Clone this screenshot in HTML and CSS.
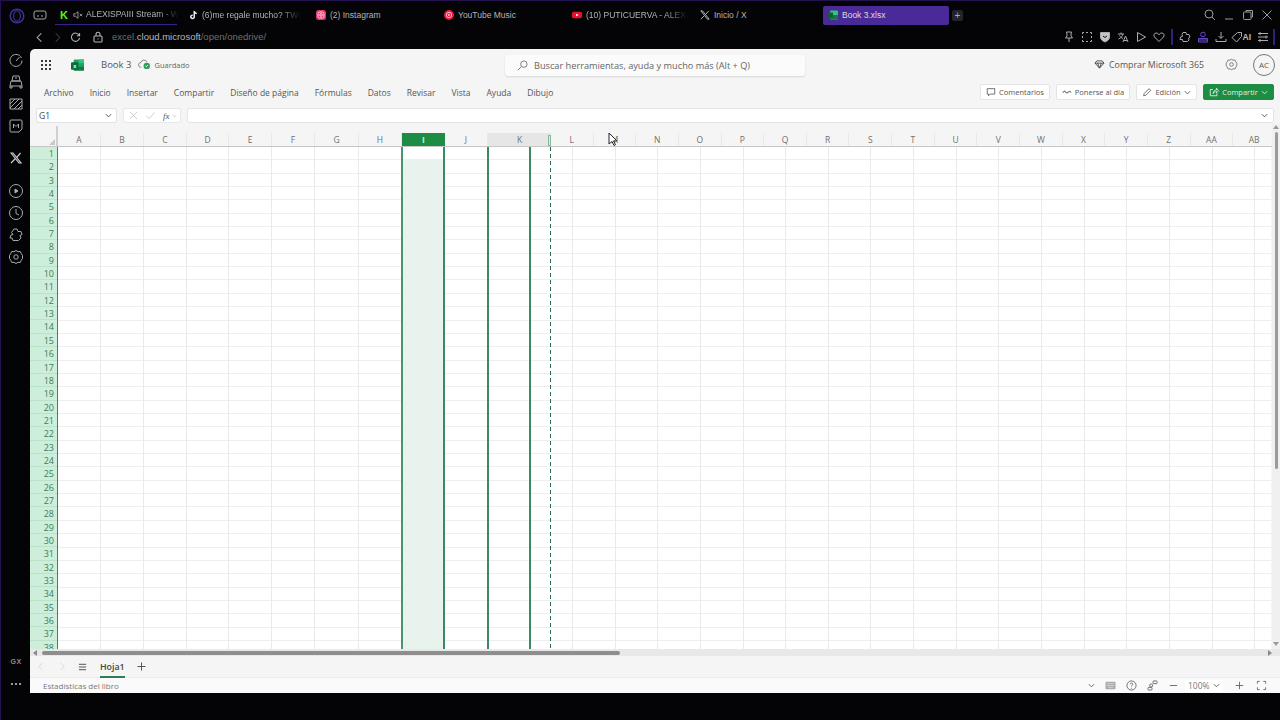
FILE: index.html
```html
<!DOCTYPE html>
<html lang="es">
<head>
<meta charset="utf-8">
<title>Book 3.xlsx</title>
<link rel="stylesheet" href="styles.css">
</head>
<body>
<div class="browser">
  <aside class="rail">
    <div class="rail-logo"><svg width="18" height="18" viewBox="0 0 18 18" fill="none" stroke="#41309a"><circle cx="9" cy="9" r="6.800" stroke-width="1.500"/><ellipse cx="9" cy="9" rx="3.400" ry="5.200" stroke-width="1.200"/></svg></div>
    <div class="rail-group">
      <svg class="ri" viewBox="0 0 16 16"><path d="M13.500 6A6 6 0 1 0 14 8.500M8 9l3.500-4"/></svg>
      <svg class="ri" viewBox="0 0 16 16"><path d="M5 2h6l1 5H4zM3 7h10l1 5H2zM2 12v2h2v-2M12 12v2h2v-2M7 4h2"/></svg>
      <svg class="ri" viewBox="0 0 16 16"><path d="M2 3h12v10H2zM2 8l5-5M2 12l9-9M6 13l8-8M10 13l4-4"/></svg>
      <svg class="ri" viewBox="0 0 16 16"><path d="M3 2h10a1 1 0 0 1 1 1v8l-3 3H3a1 1 0 0 1-1-1V3a1 1 0 0 1 1-1zM5.500 10V6l2.500 2.500L10.500 6v4"/></svg>
    </div>
    <svg class="rail-x" viewBox="0 0 12 12"><path d="M1 1l8 10h2L3 1zM10.500 1L6.800 5.300M5 7l-4 4"/></svg>
    <div class="rail-group">
      <svg class="ri" viewBox="0 0 16 16"><circle cx="8" cy="8" r="6.500"/><path d="M7 6l3 2-3 2z" fill="#bdbdbd"/></svg>
      <svg class="ri" viewBox="0 0 16 16"><circle cx="8" cy="8" r="6.500"/><path d="M8 4v4.500l3 1.500"/></svg>
      <svg class="ri" viewBox="0 0 16 16"><path d="M6 2h3l1 2.500h3l1 3-2 1 1 2.500-2.500 2.500H5l-1-2.500H2l1-3 2-.5-1.500-2z"/></svg>
      <svg class="ri" viewBox="0 0 16 16"><circle cx="8" cy="8" r="2.200"/><path d="M8 1.500l2 1.200 2.300-.2 1 2.200 1.200 1.800v3l-1.200 1.800-1 2.200-2.300-.2-2 1.200-2-1.200-2.300.2-1-2.200L1.500 9.500v-3l1.200-1.800 1-2.200 2.300.2z"/></svg>
    </div>
    <div class="rail-foot">
      <span class="rail-gx">GX</span>
      <span class="rail-dots"><i></i><i></i><i></i></span>
    </div>
  </aside>
  <div class="main">
    <div class="tabstrip">
      <svg class="workspace" viewBox="0 0 14 12" fill="none" stroke="#a5a5a5"><rect x="1" y="2" width="12" height="8" rx="2"/><path d="M4 7h2M8 7h2"/></svg>
      <div class="tab tab-live">
        <span class="fav fav-k">K</span>
        <svg class="speaker" viewBox="0 0 12 10" fill="none" stroke="#aaa"><path d="M1 3.500h2L6 1v8L3 6.500H1zM8 3.500l3 3M11 3.500l-3 3"/></svg>
        <span class="tab-title fade-short">ALEXISPAIII Stream - W</span>
      </div>
      <div class="tab">
        <svg class="fav" viewBox="0 0 10 10"><path d="M5.500 1h1.500c.2 1 .8 1.600 1.800 1.700v1.500c-.7 0-1.300-.2-1.800-.5v3C7 8.300 6 9.200 4.500 9.200 3 9.200 2 8.200 2 6.800c0-1.500 1.200-2.500 2.700-2.300v1.500c-.7-.2-1.200.2-1.200.8 0 .5.400.9 1 .9s1-.4 1-1z" fill="#eee"/></svg>
        <span class="tab-title fade">(6)me regale mucho? TWI</span>
      </div>
      <div class="tab">
        <svg class="fav" viewBox="0 0 10 10" fill="none"><rect width="10" height="10" rx="2.500" fill="#e1306c"/><rect x="2" y="2" width="6" height="6" rx="1.700" stroke="#fff" stroke-width=".8"/><circle cx="5" cy="5" r="1.300" stroke="#fff" stroke-width=".8"/></svg>
        <span class="tab-title">(2) Instagram</span>
      </div>
      <div class="tab">
        <svg class="fav" viewBox="0 0 10 10" fill="none"><circle cx="5" cy="5" r="5" fill="#f0153f"/><circle cx="5" cy="5" r="2.700" stroke="#fff" stroke-width=".7"/><path d="M4.300 3.800l2 1.200-2 1.200z" fill="#fff"/></svg>
        <span class="tab-title">YouTube Music</span>
      </div>
      <div class="tab">
        <svg class="fav" viewBox="0 0 11 10"><rect y="1.500" width="11" height="7" rx="1.800" fill="#e8112d"/><path d="M4.500 3.500L7.500 5l-3 1.500z" fill="#fff"/></svg>
        <span class="tab-title fade">(10) PUTICUERVA - ALEXI</span>
      </div>
      <div class="tab">
        <svg class="fav fav-x" viewBox="0 0 12 12"><path d="M1 1l8 10h2L3 1zM10.500 1L6.800 5.300M5 7l-4 4"/></svg>
        <span class="tab-title">Inicio / X</span>
      </div>
      <div class="tab tab-active">
        <svg class="fav" viewBox="0 0 10 10"><rect x="2" y=".5" width="8" height="9" rx="1" fill="#33c481"/><rect x="2" y="5" width="8" height="4.500" fill="#107c41"/><rect y="2.500" width="5" height="5" rx=".6" fill="#185c37"/></svg>
        <span class="tab-title">Book 3.xlsx</span>
      </div>
      <span class="new-tab">+</span>
      <div class="winctl">
        <svg class="wi" viewBox="0 0 12 12"><circle cx="5" cy="5" r="4"/><path d="M8 8l3 3"/></svg>
        <svg class="wi" viewBox="0 0 12 12"><path d="M2 10h8"/></svg>
        <svg class="wi" viewBox="0 0 12 12"><rect x="1.500" y="3" width="7.500" height="7.500" rx="1"/><path d="M4 3V1.500h6.500V8H9"/></svg>
        <svg class="wi" viewBox="0 0 12 12"><path d="M1.500 1.500l9 9M10.500 1.500l-9 9"/></svg>
      </div>
    </div>
    <div class="addressbar">
      <svg class="ai ai-nav" viewBox="0 0 10 12"><path d="M7 1.500L2.500 6 7 10.500"/></svg>
      <svg class="ai ai-nav dim" viewBox="0 0 10 12"><path d="M3 1.500L7.500 6 3 10.500"/></svg>
      <svg class="ai ai-nav" viewBox="0 0 12 12"><path d="M10 3.500A4.500 4.500 0 1 0 10.500 6.500M10.500 1v3h-3"/></svg>
      <svg class="ai ai-lock" viewBox="0 0 10 12"><rect x="1" y="5" width="8" height="6" rx="1"/><path d="M3 5V3.200a2 2 0 0 1 4 0V5M5 7.500v1"/></svg>
      <div class="url">excel.<b>cloud.microsoft</b>/open/onedrive/</div>
      <div class="ext">
        <svg class="ei" viewBox="0 0 12 12"><path d="M3.500 1h5L8 3v2l1.500 2h-7L4 5V3zM6 7v4"/></svg>
        <svg class="ei" viewBox="0 0 12 12"><path d="M1.500 3V1.500H3M5 1.500h2M9 1.500h1.500V3M10.500 5v2M10.500 9v1.500H9M7 10.500H5M3 10.500H1.500V9M1.500 7V5"/></svg>
        <svg class="ei" viewBox="0 0 12 12"><path d="M1.500 1.500h9v4.500c0 2.500-2 4-4.500 5-2.500-1-4.500-2.500-4.500-5z" fill="#c4c4c4"/><path d="M4 5l2 1.500L8 5" stroke="#111"/></svg>
        <svg class="ei" viewBox="0 0 12 12"><path d="M1 3h6M4 1.500V3M6 3c-.5 2-2 4-4.500 5M2.500 4.500C3.500 6 4.500 7 6 7.500M6 11l2.500-6 2.500 6M7 9.500h3"/></svg>
        <svg class="ei" viewBox="0 0 12 12"><path d="M2.500 1.500L10.500 6l-8 4.500z"/></svg>
        <svg class="ei" viewBox="0 0 12 12"><path d="M6 10.500L1.500 6C.3 4.500 1 2 3.300 2 4.500 2 5.500 2.800 6 3.800 6.500 2.800 7.500 2 8.700 2 11 2 11.700 4.500 10.500 6z"/></svg>
        <span class="ext-sep"></span>
        <svg class="ei" viewBox="0 0 12 12"><path d="M4 1.500h3l.5 2h2.500l1 2.500-1.500 1 .5 2-1.500 1.500H4L3.500 8.500H1L1.500 6 3.500 5.500 3 3.500z"/></svg>
        <svg class="ei ei-purple" viewBox="0 0 12 12"><circle cx="6" cy="3.500" r="2.300"/><path d="M1.500 7.500h9v3.500h-9zM1.500 9h9"/></svg>
        <svg class="ei" viewBox="0 0 12 12"><path d="M6 1v6M3.500 5L6 7.500 8.500 5M1 8v2.500h10V8"/></svg>
        <span class="ext-ai"><svg class="ei" viewBox="0 0 12 12"><path d="M1 6.500L6.500 1.500h4v4L5.500 11zM8 3.500h.5"/></svg>AI</span>
        <svg class="ei ei-menu" viewBox="0 0 12 12"><path d="M1 2.500h10M1 6h10M1 9.500h10M3 1v3M9 4.500v3M3 8v3"/></svg>
        <span class="ext-sep"></span>
      </div>
    </div>
    <div class="app">
      <header class="titlebar">
        <div class="waffle"><i></i><i></i><i></i><i></i><i></i><i></i><i></i><i></i><i></i></div>
        <svg class="xl-logo" viewBox="0 0 14 12"><rect x="3" y="0" width="11" height="12" rx="1" fill="#21a366"/><rect x="8.500" y="0" width="5.500" height="4" fill="#33c481"/><rect x="3" y="8" width="11" height="4" fill="#107c41"/><rect x="0" y="3" width="8" height="8" rx="1" fill="#0e6b39"/><text x="4" y="9.300" class="xl-x">x</text></svg>
        <span class="doc-name">Book 3</span>
        <svg class="cloud" viewBox="0 0 14 12"><path d="M3.500 9H3A2.500 2.500 0 0 1 3 4 3.500 3.500 0 0 1 9.700 3.500" fill="none" stroke="#777" stroke-width=".9"/><circle cx="9.500" cy="7.500" r="3.500" fill="#2f9e58"/><path d="M8 7.500l1 1 2-2" fill="none" stroke="#fff" stroke-width=".9"/></svg>
        <span class="saved">Guardado</span>
        <div class="search">
          <svg class="search-ic" viewBox="0 0 12 12" fill="none" stroke="#777"><circle cx="7.500" cy="4.500" r="3.500"/><path d="M5 7l-4 4"/></svg>
          <span>Buscar herramientas, ayuda y mucho más (Alt + Q)</span>
        </div>
        <div class="title-right">
          <svg class="gem" viewBox="0 0 12 10" fill="none" stroke="#444"><path d="M3 1h6l2 2.500L6 9 1 3.500zM1 3.500h10M4 3.500L6 9l2-5.500"/></svg>
          <span class="buy">Comprar Microsoft 365</span>
          <svg class="gear" viewBox="0 0 16 16" fill="none" stroke="#666"><circle cx="8" cy="8" r="2.200"/><path d="M8 1.500l2 1.200 2.300-.2 1 2.200 1.200 1.800v3l-1.200 1.800-1 2.200-2.300-.2-2 1.200-2-1.200-2.300.2-1-2.200L1.500 9.500v-3l1.200-1.800 1-2.200 2.300.2z"/></svg>
          <span class="avatar">AC</span>
        </div>
      </header>
      <nav class="ribbon">
        <span>Archivo</span><span>Inicio</span><span>Insertar</span><span>Compartir</span><span>Diseño de página</span><span>Fórmulas</span><span>Datos</span><span>Revisar</span><span>Vista</span><span>Ayuda</span><span>Dibujo</span>
        <div class="actions">
          <button class="btn btn-comments"><svg class="bi" viewBox="0 0 12 12" fill="none" stroke="#555"><path d="M1.500 2h9v6.500H5L3 10.500v-2H1.500z"/></svg>Comentarios</button>
          <button class="btn btn-catch"><svg class="bi" viewBox="0 0 12 12" fill="none" stroke="#333"><path d="M1 7l2-2.500L5 7l2 0 1.500-2L11 6.500"/></svg>Ponerse al día</button>
          <button class="btn btn-edit"><svg class="bi" viewBox="0 0 12 12" fill="none" stroke="#555"><path d="M2 10.500l.5-2.500 6-6 2 2-6 6z"/></svg>Edición<svg class="chev" viewBox="0 0 8 5" fill="none" stroke="#555"><path d="M1 1l3 3 3-3"/></svg></button>
          <button class="btn btn-share"><svg class="bi" viewBox="0 0 12 12" fill="none" stroke="#e6f5ec"><path d="M9.500 7.500V10.500H1.500V3h3M5 8c0-3 2-4.500 4-4.500V1.500l2.500 3L9 7V5.500C7.500 5.500 6 6 5 8z"/></svg>Compartir<svg class="chev" viewBox="0 0 8 5" fill="none" stroke="#e6f5ec"><path d="M1 1l3 3 3-3"/></svg></button>
        </div>
      </nav>
      <div class="formula">
        <div class="namebox">G1<svg class="chev" viewBox="0 0 8 5" fill="none" stroke="#444"><path d="M1 1l3 3 3-3"/></svg></div>
        <div class="fx-tools">
          <svg class="fx-ic" viewBox="0 0 10 10" fill="none" stroke="#c8c8c8"><path d="M1 1l8 8M9 1l-8 8"/></svg>
          <svg class="fx-ic" viewBox="0 0 10 10" fill="none" stroke="#c8c8c8"><path d="M.5 5.500l3 3 6-7"/></svg>
          <span class="fx-label">fx</span>
          <svg class="fx-chev" viewBox="0 0 8 5" fill="none" stroke="#bbb"><path d="M1 1l3 3 3-3"/></svg>
        </div>
        <div class="fx-input"><svg class="chev" viewBox="0 0 8 5" fill="none" stroke="#444"><path d="M1 1l3 3 3-3"/></svg></div>
      </div>
      <div class="sheet">
        <div class="grid-wrap">
          <div class="head-row">
            <div class="corner"></div>
            <div class="heads">
              <span>A</span><span>B</span><span>C</span><span>D</span><span>E</span><span>F</span><span>G</span><span>H</span><span class="h-sel">I</span><span>J</span><span class="h-k">K<i class="h-handle"></i></span><span>L</span><span>M</span><span>N</span><span>O</span><span>P</span><span>Q</span><span>R</span><span>S</span><span>T</span><span>U</span><span>V</span><span>W</span><span>X</span><span>Y</span><span>Z</span><span>AA</span><span>AB</span>
            </div>
            <svg class="cursor" viewBox="0 0 10 15"><path d="M1 1v11l3-2.500 2 4 1.500-.8-2-3.800h3.500z" fill="#fff" stroke="#222" stroke-width="1"/></svg>
          </div>
          <div class="body-row">
            <div class="rownums">
              <span>1</span><span>2</span><span>3</span><span>4</span><span>5</span><span>6</span><span>7</span><span>8</span><span>9</span><span>10</span><span>11</span><span>12</span><span>13</span><span>14</span><span>15</span><span>16</span><span>17</span><span>18</span><span>19</span><span>20</span><span>21</span><span>22</span><span>23</span><span>24</span><span>25</span><span>26</span><span>27</span><span>28</span><span>29</span><span>30</span><span>31</span><span>32</span><span>33</span><span>34</span><span>35</span><span>36</span><span>37</span><span>38</span>
            </div>
            <div class="cells">
              <i></i><i></i><i></i><i></i><i></i><i></i><i></i><i></i><i class="c-sel"><b></b></i><i></i><i class="c-k"></i><i class="c-dash"></i><i></i><i></i><i></i><i></i><i></i><i></i><i></i><i></i><i></i><i></i><i></i><i></i><i></i><i></i><i></i><i></i><i></i><i></i><i></i>
            </div>
          </div>
        </div>
        <div class="vscroll"><i class="arr-up"></i><b></b><i class="arr-down"></i></div>
      </div>
      <div class="hscroll"><i class="arr-left"></i><b></b><i class="arr-right"></i></div>
      <div class="sheetbar">
        <svg class="sb-nav" viewBox="0 0 6 10" fill="none" stroke="#d0d0d0"><path d="M5 1L1 5l4 4"/></svg>
        <svg class="sb-nav" viewBox="0 0 6 10" fill="none" stroke="#d0d0d0"><path d="M1 1l4 4-4 4"/></svg>
        <svg class="sb-menu" viewBox="0 0 10 8" fill="none" stroke="#444"><path d="M1 1h8M1 4h8M1 7h8"/></svg>
        <span class="sheet-tab">Hoja1</span>
        <svg class="sb-add" viewBox="0 0 9 9" fill="none" stroke="#555"><path d="M4.500 .5v8M.5 4.500h8"/></svg>
      </div>
      <footer class="status">
        <span>Estadísticas del libro</span>
        <div class="status-right">
          <svg class="chev" viewBox="0 0 8 5" fill="none" stroke="#555"><path d="M1 1l3 3 3-3"/></svg>
          <svg class="si" viewBox="0 0 12 10" fill="#888"><rect x=".5" y="1" width="11" height="8" rx="1" fill="#aaa"/><path d="M2 3h8M2 5h8M3 7h6" stroke="#eee" stroke-width=".6"/></svg>
          <svg class="si" viewBox="0 0 12 12" fill="none" stroke="#666"><circle cx="6" cy="6" r="5"/><path d="M4.500 4.500C4.500 3 7.500 3 7.500 4.500 7.500 5.500 6 5.500 6 7M6 8.500v1"/></svg>
          <svg class="si" viewBox="0 0 12 12" fill="none" stroke="#666"><rect x="6.500" y="1" width="4.500" height="3" rx="1"/><rect x="3" y="4.500" width="3" height="3" rx="1"/><rect x="1" y="8" width="4.500" height="3" rx="1"/></svg>
          <svg class="si" viewBox="0 0 12 12" fill="none" stroke="#666"><path d="M2 6h8"/></svg>
          <span class="zoom">100%<svg class="chev" viewBox="0 0 8 5" fill="none" stroke="#555"><path d="M1 1l3 3 3-3"/></svg></span>
          <svg class="si" viewBox="0 0 12 12" fill="none" stroke="#666"><path d="M6 2v8M2 6h8"/></svg>
          <svg class="si si-full" viewBox="0 0 12 12" fill="none" stroke="#666"><path d="M1.500 4V1.500H4M8 1.500h2.500V4M10.500 8v2.500H8M4 10.500H1.500V8"/></svg>
        </div>
      </footer>
    </div>
  </div>
</div>
</body>
</html>
```
FILE: styles.css
```css
* { box-sizing: border-box; }
html, body { margin: 0; height: 100%; overflow: hidden; background: #000; }
body { font-family: "Open Sans", "Noto Sans", sans-serif; color: #555; }
svg { display: block; flex: none; }

.browser { display: flex; width: 1280px; height: 720px; background: #040406; border-top: 1px solid #23104f; border-left: 1px solid #23104f; }

/* Left rail */
.rail { width: 29px; height: 693px; display: flex; flex-direction: column; align-items: center; }
.rail-logo { height: 29px; display: flex; align-items: center; margin-left: 2px; }
.rail-group { display: flex; flex-direction: column; align-items: center; gap: 6px; margin-left: 1px; }
.rail-group:nth-of-type(2) { margin-top: 22px; }
.ri { width: 16px; height: 16px; fill: none; stroke: #a9a9a9; stroke-width: 1; }
.rail-x { width: 12px; height: 12px; margin: 18px 0 19px 1px; fill: none; stroke: #cfcfcf; stroke-width: 1.200; }
.rail-foot { margin-top: auto; margin-left: 1px; display: flex; flex-direction: column; align-items: center; gap: 8px; padding-bottom: 3px; }
.rail-gx { font: 700 7px/14px "Liberation Sans", sans-serif; letter-spacing: .5px; color: #8f8f8f; }
.rail-dots { height: 14px; display: flex; align-items: center; gap: 2px; }
.rail-dots i { width: 2px; height: 2px; background: #ccc; border-radius: 50%; }

.main { width: 1250px; height: 692px; display: flex; flex-direction: column; }

/* Tab strip */
.tabstrip { height: 26px; display: flex; align-items: center; font: 8.500px/19px "Liberation Sans", sans-serif; color: #b4b4b4; margin-left: -30px; padding-top: 2px; }
.workspace { width: 14px; height: 12px; margin-left: 33px; margin-right: 8px; }
.tab { width: 128px; height: 19px; display: flex; align-items: center; padding-left: 5px; gap: 4px; }
.tab-live { width: 122px; margin-right: 6px; border-bottom: 1px solid #35228a; gap: 3px; }
.tab-active { background: #4a2a98; border-radius: 2px; color: #ddd; width: 126px; margin-right: 3px; }
.fav { width: 10px; height: 10px; flex: none; }
.fav-k { font: 900 11px/10px "Liberation Sans", sans-serif; color: #53fc18; width: 10px; }
.fav-x { fill: none; stroke: #c4c4c4; stroke-width: 1.100; }
.speaker { width: 10px; height: 10px; }
.tab-title { white-space: nowrap; }
.fade, .fade-short { -webkit-mask-image: linear-gradient(to right, #000 78%, transparent 100%); mask-image: linear-gradient(to right, #000 78%, transparent 100%); }
.new-tab { width: 11px; height: 11px; background: #23232e; border-radius: 2px; color: #aaa; font: 10px/11px "Liberation Sans", sans-serif; text-align: center; }
.winctl { margin-left: auto; display: flex; gap: 7px; padding-right: 7px; }
.wi { width: 12px; height: 12px; fill: none; stroke: #999; stroke-width: 1; }

/* Address bar */
.addressbar { height: 22px; display: flex; align-items: center; padding-bottom: 2px; font: 9.500px/14px "Liberation Sans", sans-serif; }
.ai { fill: none; stroke: #b4b4b4; stroke-width: 1.100; }
.ai-nav { width: 11px; height: 11px; margin-right: 7px; }
.ai-nav:first-child { margin-left: 4px; }
.ai-nav.dim { stroke: #3d3d3d; }
.ai-lock { width: 10px; height: 12px; margin-left: 5px; margin-right: 9px; }
.url { color: #6f6f6f; }
.url b { color: #b9b9b9; font-weight: 400; }
.ext { margin-left: auto; display: flex; align-items: center; gap: 6px; padding-right: 5px; }
.ei { width: 12px; height: 12px; fill: none; stroke: #ababab; stroke-width: 1; }
.ei-purple { stroke: #6a4bd0; }
.ei-menu { margin-right: -2px; }
.ext-sep { width: 2px; height: 16px; background: #34207c; }
.ext-ai { display: flex; align-items: center; margin-left: -2px; font: 700 8.500px/12px "Liberation Sans", sans-serif; color: #bbb; }

/* Excel app */
.app { flex: 1; background: #f5f5f5; border-radius: 5px 0 0 0; display: flex; flex-direction: column; overflow: hidden; }
.titlebar { height: 31px; display: flex; align-items: center; flex: none; }
.waffle { width: 10px; height: 10px; margin-left: 11px; display: grid; grid-template-columns: repeat(3, 2px); gap: 2px; }
.waffle i { background: #3a3a3a; }
.xl-logo { width: 13px; height: 12px; margin-left: 20px; }
.xl-x { font: 700 6px "Liberation Sans", sans-serif; fill: #fff; text-anchor: middle; }
.doc-name { font-size: 9.500px; margin-left: 17px; color: #555; }
.cloud { width: 13px; height: 11px; margin-left: 7px; }
.saved { font-size: 7.500px; margin-left: 3px; color: #666; }
.search { position: absolute; left: 505px; top: 55px; width: 300px; height: 21px; background: #fbfbfb; border-radius: 3px; box-shadow: 0 1px 2px rgba(0,0,0,.12); display: flex; align-items: center; padding-left: 12px; gap: 6px; font-size: 9.200px; color: #666; }
.search-ic { width: 11px; height: 11px; }
.title-right { margin-left: auto; display: flex; align-items: center; padding-right: 5px; }
.gem { width: 11px; height: 9px; margin-right: 4px; }
.buy { font-size: 8.800px; color: #555; }
.gear { width: 13px; height: 13px; margin-left: 21px; margin-right: 15px; }
.avatar { width: 22px; height: 22px; border: 1px solid #777; border-radius: 50%; font-size: 8px; line-height: 20px; text-align: center; color: #555; }

.ribbon { height: 24px; display: flex; align-items: center; gap: 16px; padding: 0 6px 0 14px; font-size: 8.500px; color: #555; flex: none; }
.actions { margin-left: auto; display: flex; gap: 6px; }
.btn { height: 16px; display: flex; align-items: center; justify-content: center; gap: 3px; border: 1px solid #e4e4e4; border-radius: 2px; background: #fff; font: 7.500px/14px "Open Sans", sans-serif; color: #555; padding: 0; }
.bi { width: 10px; height: 10px; }
.chev { width: 7px; height: 5px; }
.btn-comments { width: 70px; }
.btn-catch { width: 74px; }
.btn-edit { width: 61px; }
.btn-share { width: 71px; background: #1e8c45; border-color: #1e8c45; color: #dff3e6; }

.formula { height: 15px; margin: 4px 6px 0; display: flex; gap: 6px; flex: none; }
.namebox { width: 81px; background: #fff; border: 1px solid #e2e2e2; border-radius: 2px; display: flex; align-items: center; justify-content: space-between; padding: 0 4px 0 2px; font-size: 8.500px; color: #444; }
.fx-tools { width: 58px; background: #fff; border: 1px solid #e8e8e8; border-radius: 2px; display: flex; align-items: center; padding-left: 5px; gap: 8px; }
.fx-ic { width: 9px; height: 9px; }
.fx-label { font: italic 9px/12px "Liberation Serif", serif; color: #555; }
.fx-chev { width: 5px; height: 4px; margin-left: -6px; }
.fx-input { flex: 1; background: #fff; border: 1px solid #e4e4e4; border-radius: 2px; display: flex; align-items: center; justify-content: flex-end; padding-right: 5px; }

/* Sheet */
.sheet { height: 525px; margin-top: 1px; display: flex; flex: none; }
.grid-wrap { width: 1242px; display: flex; flex-direction: column; overflow: hidden; }
.head-row { height: 23px; display: flex; align-items: flex-end; position: relative; flex: none; border-bottom: 1px solid #c6c6c6; }
.corner { width: 28px; height: 20px; flex: none; background: linear-gradient(135deg, transparent 62%, #c8c8c8 63%); background-size: 8px 8px; background-position: right 1px bottom 1px; background-repeat: no-repeat; border-right: 2px solid #d0d0d0; }
.heads { display: grid; flex: none; grid-template-columns: 43px 43px 43px 42px 43px 43px 44px 43px 43px 43px 63px repeat(17, 42.650px); height: 13px; }
.heads span { text-align: center; font-size: 8.500px; line-height: 13px; color: #707070; border-right: 1px solid #e8e8e8; position: relative; }
.heads .h-sel { background: #1e8c45; color: #b9f5cd; font-weight: 700; border-right: 0; }
.heads .h-k { background: #e6e6e6; border-right: 0; }
.h-handle { position: absolute; right: 0; top: 2px; width: 3px; height: 11px; border: 1px solid #86b89b; }
.cursor { position: absolute; left: 578px; top: 8px; width: 10px; height: 15px; }

.body-row { flex: 1; display: flex; overflow: hidden; }
.rownums { width: 29px; flex: none; background: #cdeeda; border-right: 2px solid #3d8a62; }
.rownums span { display: block; height: 13.350px; text-align: right; padding-right: 3px; font-size: 9px; line-height: 13px; color: #3f7d5a; border-bottom: 1px solid #bbe2ca; }
.cells { flex: none; width: 1213px; margin-left: -1px; display: grid; grid-template-columns: 43px 43px 43px 42px 43px 43px 44px 43px 43px 43px 43px 20px 22px repeat(18, 42.650px); background: repeating-linear-gradient(to bottom, transparent 0, transparent 12.350px, #eeeeee 12.350px, #eeeeee 13.350px) #fff; }
.cells i { border-right: 1px solid #eaeaea; }
.cells .c-sel { background: #e9f3ed; border-left: 2px solid #4a9470; border-right: 2px solid #3d8a62; margin-left: -1px; }
.c-sel b { display: block; height: 12px; background: #fff; }
.cells .c-k { border-left: 2px solid #3d8a62; border-right: 2px solid #3d8a62; margin-left: -1px; }
.cells .c-dash { border-right: 0; border-left: 0; background: repeating-linear-gradient(to bottom, #2c6b4a 0, #2c6b4a 4px, transparent 4px, transparent 7px) no-repeat 19px 0 / 1px 100%; }

.vscroll { width: 8px; background: #f0f0f0; display: flex; flex-direction: column; align-items: center; padding-top: 1px; }
.vscroll b { width: 3px; height: 337px; margin-top: 3px; background: #9b9b9b; border-radius: 2px; }
.arr-up { width: 0; height: 0; border: 3px solid transparent; border-bottom: 4px solid #999; border-top: 0; }
.arr-down { width: 0; height: 0; margin-top: auto; margin-bottom: 3px; border: 3px solid transparent; border-top: 4px solid #999; border-bottom: 0; }

.hscroll { height: 7px; background: #e8e8e8; display: flex; align-items: center; flex: none; padding: 0 8px 0 3px; }
.hscroll b { width: 578px; height: 4px; margin-left: 5px; background: #8e8e8e; border-radius: 2px; }
.arr-left { width: 0; height: 0; border: 3px solid transparent; border-right: 4px solid #888; border-left: 0; }
.arr-right { width: 0; height: 0; margin-left: auto; border: 3px solid transparent; border-left: 4px solid #888; border-right: 0; }

.sheetbar { height: 22px; display: flex; align-items: center; padding-left: 8px; flex: none; border-bottom: 1px solid #ececec; }
.sb-nav { width: 5px; height: 9px; margin-right: 17px; }
.sb-menu { width: 9px; height: 8px; margin-left: -4px; }
.sheet-tab { height: 22px; margin-left: 13px; font-size: 8.800px; font-weight: 600; line-height: 22px; color: #444; border-bottom: 2px solid #2f7d57; }
.sb-add { width: 9px; height: 9px; margin-left: 12px; }

.status { flex: 1; display: flex; align-items: center; padding: 0 13px 0 13px; font-size: 8px; color: #777; background: #fafafa; }
.status-right { margin-left: auto; display: flex; align-items: center; gap: 10px; }
.si { width: 11px; height: 11px; }
.si-full { margin-left: 1px; }
.zoom { display: flex; align-items: center; gap: 3px; width: 38px; height: 12px; margin: 0 1px 0 -4px; padding-left: 3px; background: #fff; border-radius: 2px; font-size: 8.500px; line-height: 12px; }
```
